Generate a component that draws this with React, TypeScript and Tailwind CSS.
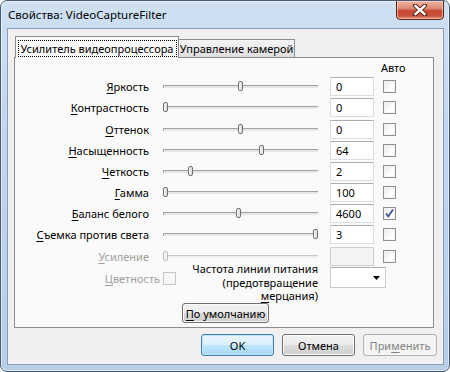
import React from 'react';

type Row = { label: string; pos: number; val: string; h: string; checked?: boolean; disabled?: boolean };

const rows: Row[] = [
  { label: 'Яркость', pos: 238, val: '0', h: 'h-[21px]' },
  { label: 'Контрастность', pos: 163, val: '0', h: 'h-[22px]' },
  { label: 'Оттенок', pos: 238, val: '0', h: 'h-[21px]' },
  { label: 'Насыщенность', pos: 259, val: '64', h: 'h-[21px]' },
  { label: 'Четкость', pos: 188, val: '2', h: 'h-[21px]' },
  { label: 'Гамма', pos: 163, val: '100', h: 'h-[21px]' },
  { label: 'Баланс белого', pos: 236, val: '4600', h: 'h-[21px]', checked: true },
  { label: 'Съемка против света', pos: 313, val: '3', h: 'h-[22px]' },
  { label: 'Усиление', pos: 163, val: '', h: 'h-[15px]', disabled: true },
];

function CheckBox({ checked, disabled }: { checked?: boolean; disabled?: boolean }) {
  return (
    <div
      className={
        'relative w-[13px] h-[13px] border ' +
        (disabled
          ? 'border-[#c6c6c6] bg-[#f7f7f7]'
          : 'border-[#8f8f8f] bg-[linear-gradient(135deg,#e6e6e6_0%,#ffffff_60%)] shadow-[inset_0_0_0_1px_#f4f4f4]')
      }
    >
      {checked && (
        <svg width="11" height="11" viewBox="0 0 11 11" className="absolute left-[0px] top-[0px]">
          <path d="M2 5.5 L4.3 8.5 L9 1.5" fill="none" stroke="#3f5595" strokeWidth="1.8" />
        </svg>
      )}
    </div>
  );
}

function Slider({ pos, disabled }: { pos: number; disabled?: boolean }) {
  return (
    <div className="relative w-[181px] h-[19px] shrink-0">
      <div
        className={
          'absolute left-[14px] top-[8px] w-[155px] h-[3px] border-t border-l ' +
          (disabled ? 'border-[#c8c8c8] bg-[#efefef]' : 'border-[#a2a2a2] bg-[#e6e6e6]')
        }
      />
      <div
        className={
          'absolute top-[4px] w-[5px] h-[10px] rounded-[2px] border ' +
          (disabled
            ? 'border-[#bdbdbd] bg-[#f3f3f3]'
            : 'border-[#707070] bg-[linear-gradient(90deg,#fafafa,#d9d9d9)]')
        }
        style={{ left: pos - 149 }}
      />
    </div>
  );
}

function Btn({ children, kind = 'normal', w }: { children: React.ReactNode; kind?: 'normal' | 'default' | 'disabled'; w: string }) {
  const base = 'flex items-center justify-center whitespace-nowrap leading-[15px] rounded-[3px] border shrink-0 ' + w + ' ';
  const cls =
    kind === 'default'
      ? 'border-[#3c7fb1] bg-[linear-gradient(#eaf6fd_0%,#d9f0fc_50%,#bee6fd_50%,#a7d9f5_100%)] shadow-[inset_0_0_0_1px_#c4e5f6] text-black'
      : kind === 'disabled'
      ? 'border-[#adb2b5] bg-[#f4f4f4] text-[#838383]'
      : 'border-[#707070] bg-[linear-gradient(#f2f2f2_0%,#ebebeb_50%,#dddddd_50%,#cfcfcf_100%)] shadow-[inset_0_0_0_1px_#fbfbfb] text-black';
  return <div className={base + cls}>{children}</div>;
}

export default function App() {
  return (
    <div
      className="w-[450px] h-[372px] flex flex-col rounded-[7px] border border-[#4a5b70] bg-[linear-gradient(180deg,#cfe0f3_0%,#c0d6ee_35%,#b7cee8_100%)] shadow-[inset_0_0_0_1px_rgba(255,255,255,0.55)] text-[11px] text-black overflow-hidden whitespace-nowrap"
      style={{ fontFamily: '"Noto Sans", "Open Sans", sans-serif' }}
    >
      {/* title bar */}
      <div className="h-[27px] flex justify-between shrink-0">
        <div className="pl-[7px] pt-[6px] leading-[15px] text-[11.5px] text-black">Свойства: VideoCaptureFilter</div>
        <div className="mt-[-1px] mr-[5px] w-[48px] h-[20px] rounded-b-[4px] border border-[#5a2418] bg-[linear-gradient(180deg,#eeb3a4_0%,#de8d78_40%,#c7452f_55%,#c9503a_80%,#dc8a73_100%)] shadow-[inset_0_0_0_1px_rgba(255,220,210,0.6)] flex items-center justify-center">
          <svg width="16" height="12" viewBox="0 0 16 12">
            <path d="M3 1.5 L13 10.5 M13 1.5 L3 10.5" stroke="#5a2418" strokeWidth="4.2" strokeLinecap="round" />
            <path d="M3.3 1.8 L12.7 10.2 M12.7 1.8 L3.3 10.2" stroke="#ffffff" strokeWidth="2.4" strokeLinecap="round" />
          </svg>
        </div>
      </div>

      {/* client area */}
      <div className="ml-[6px] w-[437px] h-[337px] border border-[#8b9db3] bg-[#f0f0f0] flex flex-col shrink-0">
        <div className="pl-[6px] pt-[7px] flex flex-col">
          {/* tab strip */}
          <div className="h-[21px] flex items-start">
            <div className="relative z-10 ml-[1px] w-[164px] h-[22px] border-t border-l border-r border-[#898c95] bg-[#fafafa] flex items-start justify-center pt-[3px]">
              <div className="h-[17px] px-[2px] border border-dotted border-black flex items-center leading-[15px]">
                Усилитель видеопроцессора
              </div>
            </div>
            <div className="ml-[-1px] mt-[3px] w-[117px] h-[18px] border-t border-l border-r border-[#898c95] bg-[linear-gradient(180deg,#f4f4f4_0%,#e9e9e9_50%,#dedede_100%)] flex items-center justify-center leading-[15px]">
              Управление камерой
            </div>
          </div>

          {/* panel */}
          <div className="w-[420px] h-[271px] border border-[#898c95] bg-[#fafafa] flex flex-col">
            <div className="h-[19px] flex">
              <div className="w-[366px]" />
              <div className="pt-[2px] leading-[15px]">Авто</div>
            </div>
            {rows.map((r, i) => (
              <div key={i} className={r.h + ' overflow-visible'}>
                <div className="h-[19px] flex items-center">
                  <div className={'w-[134px] shrink-0 text-right leading-[15px] ' + (r.disabled ? 'text-[#a0a0a0]' : '')}>
                    <span className="underline underline-offset-[2px]">{r.label[0]}</span>
                    {r.label.slice(1)}
                  </div>
                  <Slider pos={r.pos} disabled={r.disabled} />
                  <div
                    className={
                      'w-[44px] h-[19px] shrink-0 border pl-[5px] flex items-center leading-[15px] ' +
                      (r.disabled
                        ? 'border-[#cfcfcf] bg-[#f4f4f4]'
                        : 'border-[#dadde3] border-t-[#abadb3] bg-white')
                    }
                  >
                    {r.val}
                  </div>
                  <div className="ml-[9px]">
                    <CheckBox checked={r.checked} />
                  </div>
                </div>
              </div>
            ))}

            {/* bottom part */}
            <div className="h-[41px] flex items-start">
              <div className="mt-[9px] flex items-center">
                <div className="w-[145px] text-right text-[#a0a0a0] leading-[15px]">
                  <span className="underline underline-offset-[2px]">Ц</span>ветность
                </div>
                <div className="ml-[3px]">
                  <CheckBox disabled />
                </div>
              </div>
              <div className="w-[142px] text-right leading-[13.5px]">
                Частота линии питания
                <br />
                (предотвращение
                <br />
                <span className="underline underline-offset-[2px]">м</span>ерцания)
              </div>
              <div className="ml-[12px] mt-[5px] w-[56px] h-[21px] border border-[#c9cbd0] border-t-[#abadb3] bg-white flex items-center justify-end pr-[5px]">
                <svg width="7" height="4" viewBox="0 0 7 4">
                  <path d="M0 0 L7 0 L3.5 4 Z" fill="#000" />
                </svg>
              </div>
            </div>
            <div className="pl-[167px]">
              <Btn w="w-[87px] h-[20px]">
                <span>
                  <span className="underline underline-offset-[2px]">П</span>о умолчанию
                </span>
              </Btn>
            </div>
          </div>
        </div>

        {/* dialog buttons */}
        <div className="mt-[6px] pr-[6px] flex justify-end gap-[8px]">
          <Btn kind="default" w="w-[73px] h-[22px]">OK</Btn>
          <Btn w="w-[73px] h-[22px]">Отмена</Btn>
          <Btn kind="disabled" w="w-[74px] h-[22px]">
            <span>
              При<span className="underline underline-offset-[2px]">м</span>енить
            </span>
          </Btn>
        </div>
      </div>
    </div>
  );
}
